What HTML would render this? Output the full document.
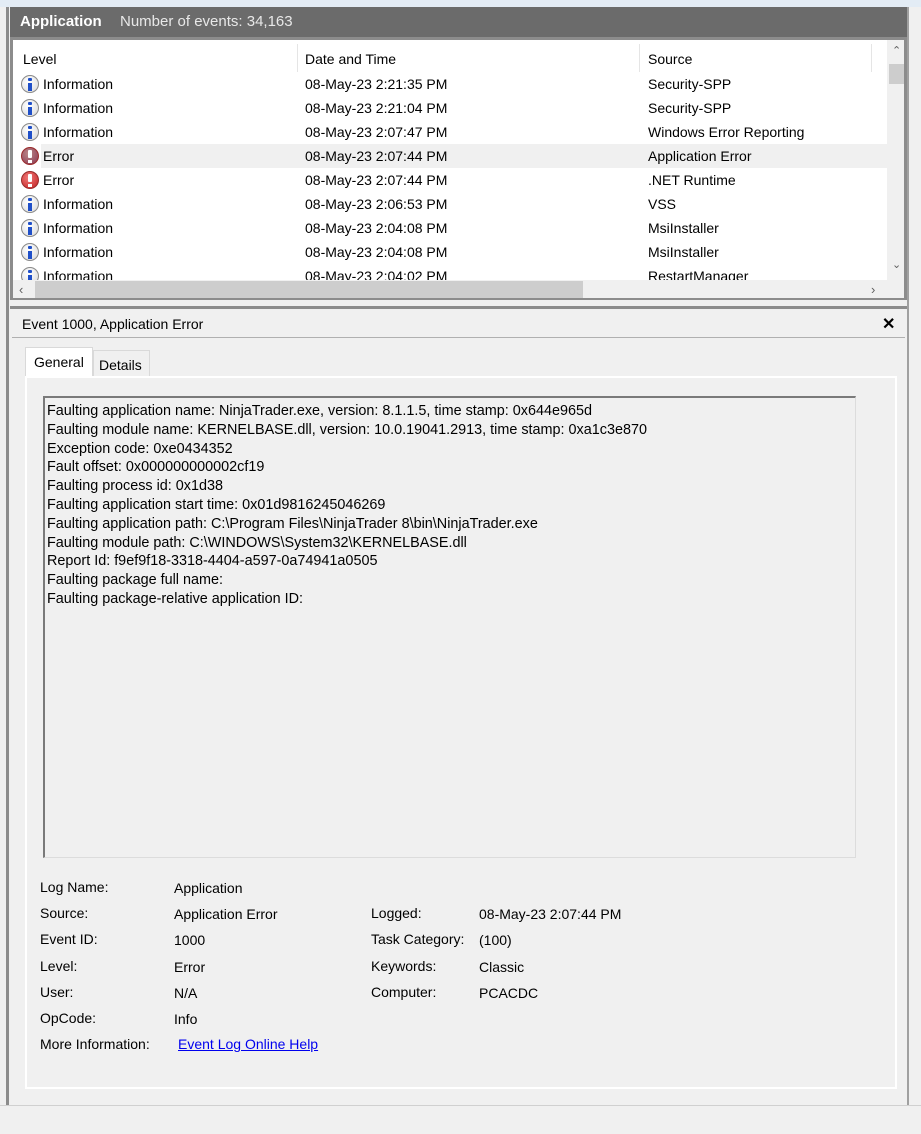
<!DOCTYPE html>
<html><head><style>
*{margin:0;padding:0;box-sizing:border-box}
body{width:921px;height:1134px;overflow:hidden;background:#f0f0f0;font-family:"Liberation Sans",sans-serif;font-size:14px;color:#000;position:relative}
.abs{position:absolute}
.row{position:absolute;left:0;height:24px;line-height:24px;width:874px}
.row span{position:absolute}
.ic{position:absolute;left:6px;top:3px;width:18px;height:18px;border-radius:50%;border:1px solid #8a8a8a;background:radial-gradient(circle at 40% 35%,#fff,#d8d8d8);}
.ic b{position:absolute;left:6px;top:2px;width:4px;height:12px;}
.ic.i b:before{content:"";position:absolute;left:0;top:0;width:4px;height:3px;background:#1f4fc8;border-radius:1px}
.ic.i b:after{content:"";position:absolute;left:0;top:5px;width:4px;height:8px;background:#1f4fc8}
.ic.e{background:radial-gradient(circle at 40% 35%,#f07a7a,#c21f1f);border-color:#9a2a2a}
.ic.e.sel{background:radial-gradient(circle at 40% 35%,#b88,#8a3550)}
.ic.e b:before{content:"";position:absolute;left:0;top:0;width:4px;height:8px;background:#fff;border-radius:1px}
.ic.e b:after{content:"";position:absolute;left:0;top:10px;width:4px;height:3px;background:#fff}
.txt div{height:18.8px;line-height:18.8px;white-space:nowrap}
.lbl{position:absolute;font-size:14px}
</style></head><body>
<div class="abs" style="left:0;top:0;width:921px;height:7px;background:#e3ecf5"></div>
<div class="abs" style="left:0;top:7px;width:9px;height:1098px;background:#f0f0f0;border-right:3px solid #8c8c8c"></div>
<div class="abs" style="left:907px;top:7px;width:14px;height:1098px;background:#f0f0f0;border-left:2px solid #a0a0a0"></div>
<div class="abs" style="left:10px;top:7px;width:897px;height:30px;background:#6b6b6b;color:#fff;line-height:30px">
 <span style="position:absolute;left:10px;font-weight:bold;font-size:15px">Application</span>
 <span style="position:absolute;left:110px;color:#e8e8e8;font-size:15px">Number of events: 34,163</span>
</div>
<div class="abs" style="left:10px;top:37px;width:897px;height:263px;border:3px solid #8c8c8c;border-bottom-width:2px;background:#fff;overflow:hidden">
 <div class="abs" style="left:2px;top:2px;width:872px;height:30px;">
  <span class="abs" style="left:8px;top:9px">Level</span>
  <span class="abs" style="left:290px;top:9px">Date and Time</span>
  <span class="abs" style="left:633px;top:9px">Source</span>
  <div class="abs" style="left:282px;top:2px;width:1px;height:28px;background:#e5e5e5"></div>
  <div class="abs" style="left:624px;top:2px;width:1px;height:28px;background:#e5e5e5"></div>
  <div class="abs" style="left:856px;top:2px;width:1px;height:28px;background:#e5e5e5"></div>
 </div>
 <div class="abs" style="left:2px;top:32px;width:872px;height:210px;">
  <div class="row" style="top:0"><i class="ic i"><b></b></i><span style="left:28px">Information</span><span style="left:290px">08-May-23 2:21:35 PM</span><span style="left:633px">Security-SPP</span></div>
  <div class="row" style="top:24px"><i class="ic i"><b></b></i><span style="left:28px">Information</span><span style="left:290px">08-May-23 2:21:04 PM</span><span style="left:633px">Security-SPP</span></div>
  <div class="row" style="top:48px"><i class="ic i"><b></b></i><span style="left:28px">Information</span><span style="left:290px">08-May-23 2:07:47 PM</span><span style="left:633px">Windows Error Reporting</span></div>
  <div class="row" style="top:72px;background:linear-gradient(90deg,#fff 26px,#f0f0f0 26px)"><i class="ic e sel"><b></b></i><span style="left:28px">Error</span><span style="left:290px">08-May-23 2:07:44 PM</span><span style="left:633px">Application Error</span></div>
  <div class="row" style="top:96px"><i class="ic e"><b></b></i><span style="left:28px">Error</span><span style="left:290px">08-May-23 2:07:44 PM</span><span style="left:633px">.NET Runtime</span></div>
  <div class="row" style="top:120px"><i class="ic i"><b></b></i><span style="left:28px">Information</span><span style="left:290px">08-May-23 2:06:53 PM</span><span style="left:633px">VSS</span></div>
  <div class="row" style="top:144px"><i class="ic i"><b></b></i><span style="left:28px">Information</span><span style="left:290px">08-May-23 2:04:08 PM</span><span style="left:633px">MsiInstaller</span></div>
  <div class="row" style="top:168px"><i class="ic i"><b></b></i><span style="left:28px">Information</span><span style="left:290px">08-May-23 2:04:08 PM</span><span style="left:633px">MsiInstaller</span></div>
  <div class="row" style="top:192px"><i class="ic i"><b></b></i><span style="left:28px">Information</span><span style="left:290px">08-May-23 2:04:02 PM</span><span style="left:633px">RestartManager</span></div>
 </div>
 <div class="abs" style="left:874px;top:0;width:20px;height:242px;background:#f0f0f0">
  <span class="abs" style="left:5px;top:4px;font-size:11px;color:#606060">&#8963;</span>
  <div class="abs" style="left:2px;top:24px;width:17px;height:20px;background:#cdcdcd"></div>
  <span class="abs" style="left:5px;top:218px;font-size:11px;color:#606060">&#8964;</span>
 </div>
 <div class="abs" style="left:0;top:240px;width:894px;height:21px;background:#f0f0f0">
  <span class="abs" style="left:6px;top:2px;font-size:13px;color:#606060">&#8249;</span>
  <div class="abs" style="left:22px;top:1px;width:548px;height:18px;background:#cdcdcd"></div>
  <span class="abs" style="left:858px;top:2px;font-size:13px;color:#606060">&#8250;</span>
 </div>
</div>
<div class="abs" style="left:10px;top:306px;width:897px;height:3px;background:#8c8c8c"></div>
<div class="abs" style="left:22px;top:316px">Event 1000, Application Error</div>
<div class="abs" style="left:882px;top:314px;font-weight:bold;font-size:16px">&#10005;</div>
<div class="abs" style="left:12px;top:337px;width:893px;height:1px;background:#b0b0b0"></div>
<div class="abs" style="left:25px;top:347px;width:68px;height:30px;background:#fff;border:1px solid #d9d9d9;border-bottom:none;padding:6px 0 0 8px">General</div>
<div class="abs" style="left:93px;top:350px;width:57px;height:26px;background:#f0f0f0;border:1px solid #d9d9d9;border-bottom:none;padding:6px 0 0 5px">Details</div>
<div class="abs" style="left:25px;top:376px;width:872px;height:713px;border:2px solid #fff;background:#f0f0f0"></div>
<div class="abs txt" style="left:43px;top:396px;width:813px;height:462px;border:1px solid #dcdcdc;border-top:2px solid #7a7a7a;border-left:2px solid #7a7a7a;background:#f0f0f0;padding:4px 0 0 2px;font-size:14.4px">
<div>Faulting application name: NinjaTrader.exe, version: 8.1.1.5, time stamp: 0x644e965d</div>
<div>Faulting module name: KERNELBASE.dll, version: 10.0.19041.2913, time stamp: 0xa1c3e870</div>
<div>Exception code: 0xe0434352</div>
<div>Fault offset: 0x000000000002cf19</div>
<div>Faulting process id: 0x1d38</div>
<div>Faulting application start time: 0x01d9816245046269</div>
<div>Faulting application path: C:\Program Files\NinjaTrader 8\bin\NinjaTrader.exe</div>
<div>Faulting module path: C:\WINDOWS\System32\KERNELBASE.dll</div>
<div>Report Id: f9ef9f18-3318-4404-a597-0a74941a0505</div>
<div>Faulting package full name: </div>
<div>Faulting package-relative application ID: </div>
</div>
<div class="lbl" style="left:40px;top:879px">Log Name:</div><div class="lbl" style="left:174px;top:880px">Application</div>
<div class="lbl" style="left:40px;top:905px">Source:</div><div class="lbl" style="left:174px;top:906px">Application Error</div>
<div class="lbl" style="left:40px;top:931px">Event ID:</div><div class="lbl" style="left:174px;top:932px">1000</div>
<div class="lbl" style="left:40px;top:958px">Level:</div><div class="lbl" style="left:174px;top:959px">Error</div>
<div class="lbl" style="left:40px;top:984px">User:</div><div class="lbl" style="left:174px;top:985px">N/A</div>
<div class="lbl" style="left:40px;top:1010px">OpCode:</div><div class="lbl" style="left:174px;top:1011px">Info</div>
<div class="lbl" style="left:40px;top:1036px">More Information:</div><div class="lbl" style="left:178px;top:1036px;color:#0000ee;text-decoration:underline">Event Log Online Help</div>
<div class="lbl" style="left:371px;top:905px">Logged:</div><div class="lbl" style="left:479px;top:906px">08-May-23 2:07:44 PM</div>
<div class="lbl" style="left:371px;top:931px">Task Category:</div><div class="lbl" style="left:479px;top:932px">(100)</div>
<div class="lbl" style="left:371px;top:958px">Keywords:</div><div class="lbl" style="left:479px;top:959px">Classic</div>
<div class="lbl" style="left:371px;top:984px">Computer:</div><div class="lbl" style="left:479px;top:985px">PCACDC</div>
<div class="abs" style="left:0;top:1105px;width:921px;height:1px;background:#d0d0d0"></div>
</body></html>
